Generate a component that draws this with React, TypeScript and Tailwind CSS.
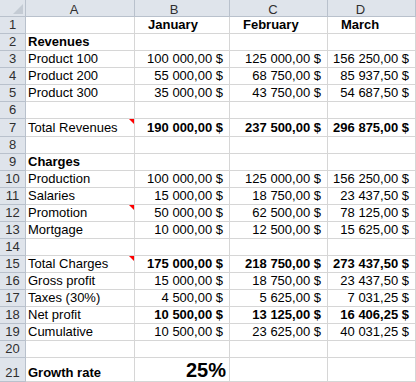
import React from 'react';

type Row = {
  n: number;
  label?: string;
  labelBold?: boolean;
  values?: string[];
  valuesBold?: boolean;
  comment?: boolean;
  h?: string;
};

const rows: Row[] = [
  { n: 2, label: 'Revenues', labelBold: true },
  { n: 3, label: 'Product 100', values: ['100 000,00 $', '125 000,00 $', '156 250,00 $'] },
  { n: 4, label: 'Product 200', values: ['55 000,00 $', '68 750,00 $', '85 937,50 $'] },
  { n: 5, label: 'Product 300', values: ['35 000,00 $', '43 750,00 $', '54 687,50 $'] },
  { n: 6 },
  {
    n: 7,
    label: 'Total Revenues',
    values: ['190 000,00 $', '237 500,00 $', '296 875,00 $'],
    valuesBold: true,
    comment: true,
    h: 'h-[18px]',
  },
  { n: 8 },
  { n: 9, label: 'Charges', labelBold: true },
  { n: 10, label: 'Production', values: ['100 000,00 $', '125 000,00 $', '156 250,00 $'] },
  { n: 11, label: 'Salaries', values: ['15 000,00 $', '18 750,00 $', '23 437,50 $'] },
  { n: 12, label: 'Promotion', values: ['50 000,00 $', '62 500,00 $', '78 125,00 $'], comment: true },
  { n: 13, label: 'Mortgage', values: ['10 000,00 $', '12 500,00 $', '15 625,00 $'] },
  { n: 14 },
  {
    n: 15,
    label: 'Total Charges',
    values: ['175 000,00 $', '218 750,00 $', '273 437,50 $'],
    valuesBold: true,
    comment: true,
  },
  { n: 16, label: 'Gross profit', values: ['15 000,00 $', '18 750,00 $', '23 437,50 $'] },
  { n: 17, label: 'Taxes (30%)', values: ['4 500,00 $', '5 625,00 $', '7 031,25 $'] },
  { n: 18, label: 'Net profit', values: ['10 500,00 $', '13 125,00 $', '16 406,25 $'], valuesBold: true },
  { n: 19, label: 'Cumulative', values: ['10 500,00 $', '23 625,00 $', '40 031,25 $'] },
  { n: 20 },
];

const headCell = 'bg-[#dfe4eb] border-r border-b border-[#b9c1cc] text-[#2f2f2f]';
const gridCell = 'border-r border-b border-[#d6d6d6] bg-white text-black';

function RowHead({ n, h = 'h-[17px]' }: { n: number; h?: string }) {
  return (
    <div className={`${headCell} ${h} flex items-end justify-center leading-[16px]`}>
      {n}
    </div>
  );
}

export default function App() {
  return (
    <div
      className="w-[416px] h-[382px] overflow-hidden bg-white text-[13px]"
      style={{ fontFamily: '"Liberation Sans", Arial, sans-serif' }}
    >
      <div className="grid grid-cols-[26px_109px_95px_98px_88px]">
        {/* Column headers */}
        <div className={`${headCell} h-[17px] relative`}>
          <div className="absolute right-[2px] bottom-[2px] w-0 h-0 border-l-[10px] border-l-transparent border-b-[10px] border-b-[#c4cbd4]" />
        </div>
        <div className={`${headCell} h-[17px] pt-[3px] leading-[13px] text-center pr-[12px]`}>A</div>
        <div className={`${headCell} h-[17px] pt-[3px] leading-[13px] text-center pr-[16px]`}>B</div>
        <div className={`${headCell} h-[17px] pt-[3px] leading-[13px] text-center pr-[11px]`}>C</div>
        <div className={`${headCell} h-[17px] pt-[3px] leading-[13px] text-center pr-[22px]`}>D</div>

        {/* Row 1 */}
        <RowHead n={1} />
        <div className={`${gridCell} h-[17px]`} />
        <div className={`${gridCell} h-[17px] pl-[13px] leading-[16px] font-bold`}>January</div>
        <div className={`${gridCell} h-[17px] pl-[13px] leading-[16px] font-bold`}>February</div>
        <div className={`${gridCell} h-[17px] pl-[13px] leading-[16px] font-bold`}>March</div>

        {rows.map((r) => {
          const h = r.h ?? 'h-[17px]';
          return (
            <React.Fragment key={r.n}>
              <RowHead n={r.n} h={h} />
              <div
                className={`${gridCell} ${h} relative flex items-end pl-[2px] leading-[16px] ${
                  r.labelBold ? 'font-bold' : ''
                }`}
              >
                {r.label}
                {r.comment && (
                  <div className="absolute right-0 top-0 w-0 h-0 border-l-[5px] border-l-transparent border-t-[5px] border-t-[#ff0000]" />
                )}
              </div>
              {[0, 1, 2].map((i) => (
                <div
                  key={i}
                  className={`${gridCell} ${h} flex items-end justify-end pr-[6px] leading-[16px] whitespace-pre ${
                    r.valuesBold ? 'font-bold' : ''
                  }`}
                >
                  {r.values?.[i]}
                </div>
              ))}
            </React.Fragment>
          );
        })}

        {/* Row 21 */}
        <RowHead n={21} h="h-[24px]" />
        <div className={`${gridCell} h-[24px] flex items-end pl-[2px] leading-[16px] font-bold`}>Growth rate</div>
        <div className={`${gridCell} h-[24px] flex items-end justify-end pr-[3px] text-[20px] leading-[22px] font-bold`}>
          25%
        </div>
        <div className={`${gridCell} h-[24px]`} />
        <div className={`${gridCell} h-[24px]`} />
      </div>
    </div>
  );
}
